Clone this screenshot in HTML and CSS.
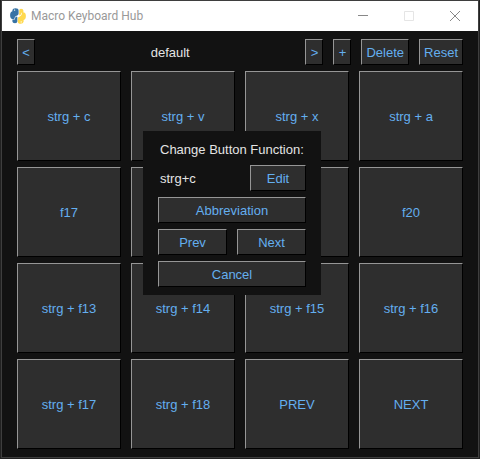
FILE: index.html
```html
<!DOCTYPE html>
<html lang="en">
<head>
<meta charset="utf-8">
<title>Macro Keyboard Hub</title>
<link rel="stylesheet" href="styles.css">
</head>
<body>
<div class="window">
  <header class="titlebar">
    <svg class="logo" viewBox="0 0 16 16" aria-hidden="true">
      <path fill="#3773a5" d="M2.4 3.2V2Q2.8.2 5.4.2Q8.6.2 8.6 2.4V5.6Q8.6 7.4 6.6 7.8Q4.6 8.2 4.2 11.2H2.6Q.1 10.8.1 7.2Q.1 3.6 2.4 3.2Z"/>
      <path fill="#3773a5" d="M4.8 11.4Q5 8.6 6.8 8.4Q7.6 8.3 7.4 10V13.6Q7.2 15.3 5 15.3Q2.4 15.1 2.4 13.4V11.8Z"/>
      <path fill="#ffd94f" d="M9.2 2.6Q9.2.8 11 .8Q13.4.9 13.4 2.6V4.4H13.8Q15.9 4.8 15.9 8Q15.9 11.6 13.6 12V13.8Q13.2 15.8 10.6 15.8Q7.8 15.8 7.8 13.8V10.4Q7.8 8.8 9.8 8.4Q11.8 8 12 4.8H11.4Q11.2 7.2 9.6 7.4Q9.2 7.2 9.2 6Z"/>
      <circle cx="4.6" cy="2.1" r=".7" fill="#fff"/>
      <circle cx="11.2" cy="13.9" r=".7" fill="#fff"/>
    </svg>
    <h1 class="title">Macro Keyboard Hub</h1>
    <button class="caption" aria-label="Minimize"><svg viewBox="0 0 10 10"><path d="M0 4.5H10"/></svg></button>
    <button class="caption" aria-label="Maximize" disabled><svg viewBox="0 0 10 10"><path d="M.5.5H9.5V9.5H.5Z"/></svg></button>
    <button class="caption" aria-label="Close"><svg viewBox="0 0 10 10"><path d="M0 0L10 10M10 0L0 10"/></svg></button>
  </header>
  <main class="content">
    <div class="toolbar">
      <button class="btn small">&lt;</button>
      <span class="profile">default</span>
      <button class="btn small">&gt;</button>
      <button class="btn small">+</button>
      <button class="btn">Delete</button>
      <button class="btn">Reset</button>
    </div>
    <div class="keys">
      <button class="btn">strg + c</button>
      <button class="btn">strg + v</button>
      <button class="btn">strg + x</button>
      <button class="btn">strg + a</button>
      <button class="btn">f17</button>
      <button class="btn">f18</button>
      <button class="btn">f19</button>
      <button class="btn">f20</button>
      <button class="btn">strg + f13</button>
      <button class="btn">strg + f14</button>
      <button class="btn">strg + f15</button>
      <button class="btn">strg + f16</button>
      <button class="btn">strg + f17</button>
      <button class="btn">strg + f18</button>
      <button class="btn">PREV</button>
      <button class="btn">NEXT</button>
    </div>
  </main>
  <section class="dialog" role="dialog" aria-labelledby="dialog-title">
    <h2 class="dialog-title" id="dialog-title">Change Button Function:</h2>
    <div class="row">
      <span class="current">strg+c</span>
      <button class="btn edit">Edit</button>
    </div>
    <button class="btn">Abbreviation</button>
    <div class="row">
      <button class="btn grow">Prev</button>
      <button class="btn grow">Next</button>
    </div>
    <button class="btn">Cancel</button>
  </section>
</div>
</body>
</html>
```
FILE: styles.css
```css
* {
  box-sizing: border-box;
}

body {
  margin: 0;
  padding: 0 1px 1px;
  background: #222;
  font: 13px/16px "Liberation Sans", Arial, sans-serif;
}

.window {
  position: relative;
  display: flex;
  flex-direction: column;
  min-height: calc(100vh - 1px);
  border: 1px solid #3e3e3e;
  background: #121212;
}

.titlebar {
  display: flex;
  align-items: center;
  height: 30px;
  padding-left: 8px;
  background: #fff;
}

.logo {
  width: 16px;
  height: 16px;
  margin-right: 5px;
}

.title {
  flex: 1;
  margin: 0;
  color: #999;
  font: 12px/16px Roboto, "Open Sans", sans-serif;
}

.caption {
  display: flex;
  align-items: center;
  justify-content: center;
  width: 46px;
  height: 30px;
  padding: 0;
  border: 0;
  background: none;
  color: #888;
}

.caption:disabled {
  color: #e5e5e5;
}

.caption svg {
  width: 10px;
  height: 10px;
  fill: none;
  stroke: currentColor;
}

.content {
  flex: 1;
  display: flex;
  flex-direction: column;
  gap: 6px;
  padding: 8px 15px;
}

.toolbar {
  display: flex;
  align-items: center;
  gap: 10px;
}

.profile {
  flex: 1;
  padding-top: 2px;
  color: #e4e4e4;
  text-align: center;
}

.btn {
  min-height: 26px;
  padding: 2px 4px 0;
  border: 1px solid;
  border-color: #969696 #000 #000 #969696;
  background: #2e2e2e;
  color: #64aff0;
  font: inherit;
}

.small {
  width: 18px;
}

.keys {
  flex: 1;
  display: grid;
  grid-template-columns: repeat(4, 1fr);
  grid-auto-rows: 1fr;
  gap: 6px 10px;
}

.dialog {
  position: absolute;
  top: 130px;
  left: 141px;
  display: flex;
  flex-direction: column;
  gap: 6px;
  width: 178px;
  padding: 8px 15px;
  background: #121212;
  color: #e4e4e4;
}

.dialog-title {
  margin: 0;
  padding: 2px 0 0 2px;
  font: inherit;
  line-height: 18px;
  white-space: nowrap;
}

.row {
  display: flex;
  align-items: center;
  gap: 10px;
}

.current {
  flex: 1;
  padding: 2px 0 0 2px;
}

.edit {
  width: 56px;
}

.grow {
  flex: 1;
}
```
